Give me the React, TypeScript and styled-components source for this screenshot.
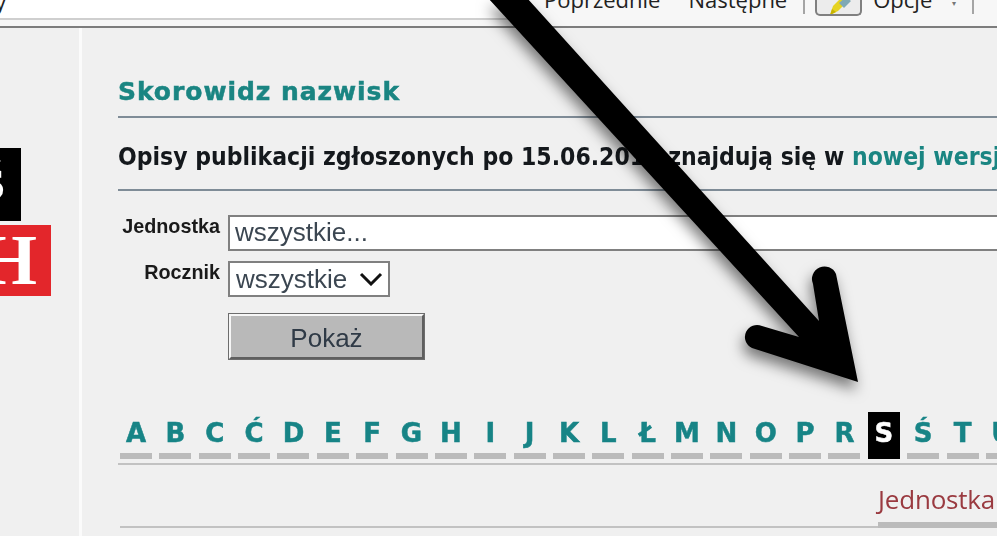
import React from "react";
import styled, { createGlobalStyle } from "styled-components";

const Global = createGlobalStyle`
  html, body { margin: 0; padding: 0; background: #f0f0f0; }
  * { box-sizing: border-box; }
`;
const Frame = styled.div`
  position: relative;
  width: 997px;
  height: 536px;
  overflow: hidden;
  background: #f0f0f0;
  font-family: "Liberation Sans", Arial, sans-serif;
`;
const Blurred = styled.div`
  filter: blur(0.7px);
  height: 100%;
  display: flex;
  flex-direction: column;
`;
const Toolbar = styled.div`
  flex: none;
  height: 28px;
  display: flex;
  align-items: flex-start;
  background: #f7f7f7;
  border-bottom: 2px solid #7d7d7d;
  overflow: hidden;
  font-family: "Open Sans", sans-serif;
  font-size: 22px;
  color: #222;
`;
const FindBox = styled.div`
  flex: none;
  width: 516px;
  height: 20px;
  background: #fff;
  border-bottom: 2px solid #cfcfcf;
  line-height: 20px;
  overflow: hidden;
`;
const FindText = styled.div`
  margin-top: -9px;
  margin-left: -5px;
`;
const ToolText = styled.span<{ $left: number }>`
  flex: none;
  margin-left: ${(p) => p.$left}px;
  margin-top: -14px;
  line-height: 26px;
  white-space: nowrap;
`;
const ToolSep = styled.div<{ $left: number }>`
  flex: none;
  width: 2px;
  height: 14px;
  margin-left: ${(p) => p.$left}px;
  background: #a5a5a5;
`;
const ToolButton = styled.div`
  flex: none;
  width: 47px;
  height: 16px;
  margin-left: 10px;
  border: 2px solid #808080;
  border-top: 0;
  border-radius: 0 0 5px 5px;
  background: #ececec;
  overflow: hidden;
  display: flex;
  justify-content: center;
`;
const Caret = styled.span`
  flex: none;
  margin-left: 20px;
  font-size: 8px;
  line-height: 6px;
  color: #777;
`;
const Body = styled.div`
  flex: 1;
  display: flex;
  min-height: 0;
`;
const Sidebar = styled.aside`
  flex: none;
  width: 79px;
  padding-top: 120px;
  display: flex;
  flex-direction: column;
  align-items: flex-start;
  gap: 4px;
`;
const BlackLogo = styled.div`
  width: 21px;
  height: 73px;
  background: #000;
  color: #fff;
  overflow: hidden;
  font-family: "Liberation Serif", serif;
  font-weight: 700;
  font-size: 44px;
  line-height: 73px;
  display: flex;
  justify-content: flex-end;
  padding-right: 16px;
`;
const RedLogo = styled.div`
  width: 51px;
  height: 71px;
  background: #e3262b;
  color: #fff;
  overflow: hidden;
  font-family: "Liberation Serif", serif;
  font-weight: 700;
  font-size: 72px;
  line-height: 71px;
  display: flex;
  justify-content: flex-end;
  padding-right: 14px;
`;
const Main = styled.main`
  flex: 1;
  min-width: 0;
  border-left: 3px solid #fbfbfb;
  padding-left: 36px;
  overflow: hidden;
`;
const Title = styled.h1`
  margin: 0;
  height: 90px;
  padding-top: 46px;
  border-bottom: 2px solid #7f8c97;
  font-family: "DejaVu Sans", sans-serif;
  font-weight: 700;
  font-size: 25px;
  letter-spacing: 0.95px;
  -webkit-text-stroke: 0.5px #1a8582;
  line-height: 36px;
  color: #1a8582;
  white-space: nowrap;
`;
const Notice = styled.p`
  margin: 0;
  height: 73px;
  padding-top: 22px;
  border-bottom: 2px solid #7f8c97;
  font-family: "DejaVu Sans Condensed", "DejaVu Sans", sans-serif;
  font-weight: 700;
  font-size: 24.5px;
  line-height: 34px;
  color: #14181c;
  white-space: nowrap;
`;
const NoticeLink = styled.a`
  color: #1a8582;
`;
const Form = styled.form`
  margin-top: 24px;
  display: grid;
  grid-template-columns: 102px 1fr;
  column-gap: 8px;
  row-gap: 10px;
`;
const Label = styled.label`
  text-align: right;
  font-weight: 700;
  font-size: 19.8px;
  line-height: 23px;
  color: #1a1a1a;
`;
const TextField = styled.input`
  width: 900px;
  height: 36px;
  border: 2px solid #808080;
  background: #fff;
  padding: 0 5px 2px;
  font: 26px "Liberation Sans", sans-serif;
  color: #3b4651;
`;
const Select = styled.select`
  width: 162px;
  height: 36px;
  appearance: none;
  border: 2px solid #808080;
  border-radius: 0;
  background: #fff url("data:image/svg+xml,%3Csvg xmlns='http://www.w3.org/2000/svg' width='24' height='14'%3E%3Cpath d='M2 2l10 10L22 2' fill='none' stroke='%23111' stroke-width='3'/%3E%3C/svg%3E") no-repeat right 5px center;
  padding: 0 6px;
  font: 26px "Liberation Sans", sans-serif;
  color: #3b4651;
`;
const Submit = styled.button`
  grid-column: 2;
  width: 197px;
  height: 47px;
  margin-top: 6px;
  border: 3px solid;
  border-color: #f6f6f6 #5f5f5f #5f5f5f #f6f6f6;
  outline: 1.5px solid #6d6d6d;
  outline-offset: -1.5px;
  background: #b9b9b9;
  font: 26px "Liberation Sans", sans-serif;
  color: #2f3a46;
  padding: 3px 0 0;
`;
const Alphabet = styled.nav`
  margin-top: 52px;
  padding: 0 0 4px 2px;
  border-bottom: 2px solid #c2c2c2;
  display: flex;
  gap: 7.37px;
  width: 900px;
`;
const Letter = styled.a<{ $active?: boolean }>`
  flex: none;
  width: 32px;
  height: 47px;
  border-bottom: 6px solid ${(p) => (p.$active ? "#000" : "#bbb")};
  background: ${(p) => (p.$active ? "#000" : "transparent")};
  color: ${(p) => (p.$active ? "#fff" : "#178486")};
  -webkit-text-stroke: 0.5px currentColor;
  font-family: "DejaVu Sans", sans-serif;
  font-weight: 700;
  font-size: 26px;
  line-height: 42px;
  text-align: center;
`;
const TabRow = styled.div`
  display: grid;
  grid-template-columns: 758px 300px;
  margin-left: 2px;
  height: 63px;
  align-items: end;
`;
const TabRule = styled.div`
  height: 2px;
  background: #c2c2c2;
`;
const Tab = styled.div`
  height: 63px;
  border-bottom: 6px solid #bbb;
  font-family: "Open Sans", sans-serif;
  font-size: 26px;
  letter-spacing: -0.2px;
  line-height: 68px;
  color: #9a3a40;
`;
const Arrow = styled.svg`
  position: absolute;
  inset: 0;
  filter: drop-shadow(-2px 8px 7px rgba(0, 0, 0, 0.5));
`;

const LETTERS = "A B C Ć D E F G H I J K L Ł M N O P R S Ś T U W".split(" ");

export default function App() {
  return (
    <Frame>
      <Global />
      <Blurred>
        <Toolbar>
          <FindBox>
            <FindText>y</FindText>
          </FindBox>
          <ToolText $left={28}>Poprzednie</ToolText>
          <ToolText $left={28}>Następne</ToolText>
          <ToolSep $left={16} />
          <ToolButton>
            <svg width="34" height="16" viewBox="0 0 34 16">
              <path d="M8 15 L11 6 L21 -4 L27 0 L16 11 Z" fill="#e6d321" />
              <path d="M17 3 L24 -3 L29 1 L22 8 Z" fill="#7fa9b5" />
              <path d="M8 15 L10 9 L14 12 Z" fill="#c8b400" />
            </svg>
          </ToolButton>
          <ToolText $left={11}>Opcje</ToolText>
          <Caret>▾</Caret>
          <ToolSep $left={16} />
        </Toolbar>
        <Body>
          <Sidebar>
            <BlackLogo>Ś</BlackLogo>
            <RedLogo>H</RedLogo>
          </Sidebar>
          <Main>
            <Title>Skorowidz nazwisk</Title>
            <Notice>
              Opisy publikacji zgłoszonych po 15.06.2011 znajdują się w{" "}
              <NoticeLink>nowej wersji</NoticeLink>
            </Notice>
            <Form>
              <Label>Jednostka</Label>
              <TextField defaultValue="wszystkie..." />
              <Label>Rocznik</Label>
              <Select>
                <option>wszystkie</option>
              </Select>
              <Submit type="button">Pokaż</Submit>
            </Form>
            <Alphabet>
              {LETTERS.map((l) => (
                <Letter key={l} $active={l === "S"}>
                  {l}
                </Letter>
              ))}
            </Alphabet>
            <TabRow>
              <TabRule />
              <Tab>Jednostka</Tab>
            </TabRow>
          </Main>
        </Body>
      </Blurred>
      <Arrow width="997" height="536" viewBox="0 0 997 536">
        <path
          d="M488 -2 L799 337 L762 326 A12 12 0 0 0 752 348 L858 382 L836 274 A12 12 0 0 0 813 284 L819 321 L527 -2 Z"
          fill="#000"
        />
      </Arrow>
    </Frame>
  );
}
